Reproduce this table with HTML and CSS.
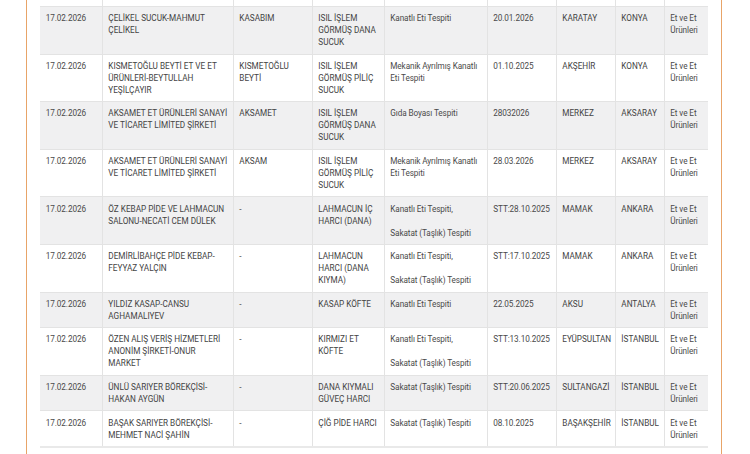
FILE: index.html
```html
<!DOCTYPE html>
<html lang="tr">
<head>
<meta charset="utf-8">
<title>Tespit Listesi</title>
<link rel="stylesheet" href="styles.css">
</head>
<body>
<div class="page">
  <table class="list">
    <colgroup>
      <col class="c-date"><col class="c-firm"><col class="c-brand"><col class="c-prod"><col class="c-find">
      <col class="c-batch"><col class="c-dist"><col class="c-city"><col class="c-group">
    </colgroup>
    <tbody>
      <tr class="spacer"><td></td><td></td><td></td><td></td><td></td><td></td><td></td><td></td><td></td></tr>
      <tr class="odd">
        <td>17.02.2026</td><td class="up firm">ÇELİKEL SUCUK-MAHMUT ÇELİKEL</td><td class="up">KASABIM</td><td class="up">ISIL İŞLEM GÖRMÜŞ DANA SUCUK</td><td>Kanatlı Eti Tespiti</td><td>20.01.2026</td><td class="up">KARATAY</td><td class="up">KONYA</td><td>Et ve Et Ürünleri</td>
      </tr>
      <tr>
        <td>17.02.2026</td><td class="up firm">KISMETOĞLU BEYTİ ET VE ET ÜRÜNLERİ-BEYTULLAH YEŞİLÇAYIR</td><td class="up">KISMETOĞLU BEYTİ</td><td class="up">ISIL İŞLEM GÖRMÜŞ PİLİÇ SUCUK</td><td>Mekanik Ayrılmış Kanatlı Eti Tespiti</td><td>01.10.2025</td><td class="up">AKŞEHİR</td><td class="up">KONYA</td><td>Et ve Et Ürünleri</td>
      </tr>
      <tr class="odd">
        <td>17.02.2026</td><td class="up firm">AKSAMET ET ÜRÜNLERİ SANAYİ VE TİCARET LİMİTED ŞİRKETİ</td><td class="up">AKSAMET</td><td class="up">ISIL İŞLEM GÖRMÜŞ DANA SUCUK</td><td>Gıda Boyası Tespiti</td><td>28032026</td><td class="up">MERKEZ</td><td class="up">AKSARAY</td><td>Et ve Et Ürünleri</td>
      </tr>
      <tr>
        <td>17.02.2026</td><td class="up firm">AKSAMET ET ÜRÜNLERİ SANAYİ VE TİCARET LİMİTED ŞİRKETİ</td><td class="up">AKSAM</td><td class="up">ISIL İŞLEM GÖRMÜŞ PİLİÇ SUCUK</td><td>Mekanik Ayrılmış Kanatlı Eti Tespiti</td><td>28.03.2026</td><td class="up">MERKEZ</td><td class="up">AKSARAY</td><td>Et ve Et Ürünleri</td>
      </tr>
      <tr class="odd">
        <td>17.02.2026</td><td class="up firm">ÖZ KEBAP PİDE VE LAHMACUN SALONU-NECATİ CEM DÜLEK</td><td>-</td><td class="up">LAHMACUN İÇ HARCI (DANA)</td><td>Kanatlı Eti Tespiti,<br><br>Sakatat (Taşlık) Tespiti</td><td>STT:28.10.2025</td><td class="up">MAMAK</td><td class="up">ANKARA</td><td>Et ve Et Ürünleri</td>
      </tr>
      <tr>
        <td>17.02.2026</td><td class="up firm">DEMİRLİBAHÇE PİDE KEBAP-FEYYAZ YALÇIN</td><td>-</td><td class="up">LAHMACUN HARCI (DANA KIYMA)</td><td>Kanatlı Eti Tespiti,<br><br>Sakatat (Taşlık) Tespiti</td><td>STT:17.10.2025</td><td class="up">MAMAK</td><td class="up">ANKARA</td><td>Et ve Et Ürünleri</td>
      </tr>
      <tr class="odd">
        <td>17.02.2026</td><td class="up firm">YILDIZ KASAP-CANSU AGHAMALIYEV</td><td>-</td><td class="up">KASAP KÖFTE</td><td>Kanatlı Eti Tespiti</td><td>22.05.2025</td><td class="up">AKSU</td><td class="up">ANTALYA</td><td>Et ve Et Ürünleri</td>
      </tr>
      <tr>
        <td>17.02.2026</td><td class="up firm">ÖZEN ALIŞ VERİŞ HİZMETLERİ ANONİM ŞİRKETİ-ONUR MARKET</td><td>-</td><td class="up">KIRMIZI ET KÖFTE</td><td>Kanatlı Eti Tespiti,<br><br>Sakatat (Taşlık) Tespiti</td><td>STT:13.10.2025</td><td class="up">EYÜPSULTAN</td><td class="up">İSTANBUL</td><td>Et ve Et Ürünleri</td>
      </tr>
      <tr class="odd">
        <td>17.02.2026</td><td class="up firm">ÜNLÜ SARIYER BÖREKÇİSİ-HAKAN AYGÜN</td><td>-</td><td class="up">DANA KIYMALI GÜVEÇ HARCI</td><td>Sakatat (Taşlık) Tespiti</td><td>STT:20.06.2025</td><td class="up">SULTANGAZİ</td><td class="up">İSTANBUL</td><td>Et ve Et Ürünleri</td>
      </tr>
      <tr>
        <td>17.02.2026</td><td class="up firm">BAŞAK SARIYER BÖREKÇİSİ-MEHMET NACİ ŞAHİN</td><td>-</td><td class="up">ÇİĞ PİDE HARCI</td><td>Sakatat (Taşlık) Tespiti</td><td>08.10.2025</td><td class="up">BAŞAKŞEHİR</td><td class="up">İSTANBUL</td><td>Et ve Et Ürünleri</td>
      </tr>
    </tbody>
  </table>
</div>
</body>
</html>
```

FILE: styles.css
```css
html, body {
  margin: 0;
  padding: 0;
  background: #ffffff;
}

body {
  font-family: Roboto, "Liberation Sans", sans-serif;
  color: #4a4a4a;
}

.page {
  box-sizing: border-box;
  margin-left: 26px;
  width: 696px;
  min-height: 100vh;
  border-left: 1px solid #e8a468;
  border-right: 1px solid #e8a468;
  padding: 0 13px;
}

.list {
  width: 668px;
  table-layout: fixed;
  border-collapse: collapse;
  font-size: 8.2px;
  line-height: 12px;
  letter-spacing: -0.1px;
  border-bottom: 2px solid #e9e9e9;
}

.c-date { width: 62px; }
.c-firm { width: 131px; }
.c-brand { width: 79px; }
.c-prod { width: 72px; }
.c-find { width: 103px; }
.c-batch { width: 69px; }
.c-dist { width: 59px; }
.c-city { width: 49px; }
.c-group { width: 44px; }

.list td {
  vertical-align: top;
  padding: 5.3px 2px 5.3px 5.8px;
  border: 1px solid #e3e3e3;
}

.list tr:first-child td {
  border-top: 0;
}

.list td:first-child {
  border-left: 0;
}

.list td:last-child {
  border-right: 0;
}

.list tr.spacer td {
  height: 6px;
  padding: 0;
}

.list tr.odd td {
  background: #f0f0f1;
}

.list td.up {
  color: #444;
  letter-spacing: 0;
}

.list td.firm {
  padding-right: 3.6px;
}
```
